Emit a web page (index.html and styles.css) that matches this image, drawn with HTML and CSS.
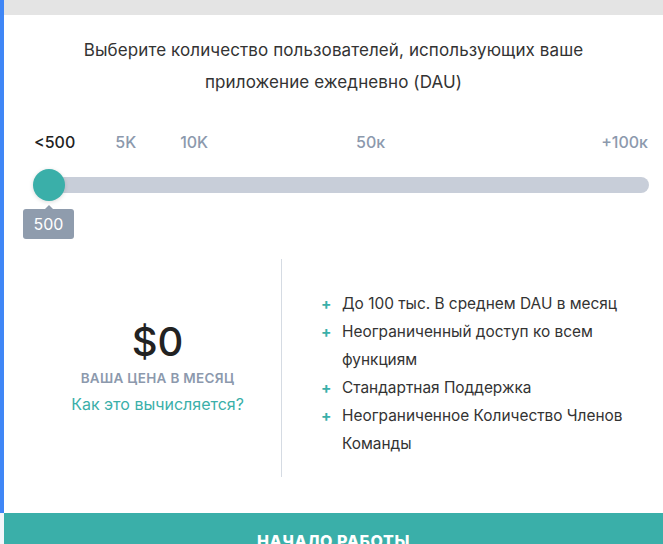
FILE: index.html
```html
<!DOCTYPE html>
<html lang="ru">
<head>
<meta charset="utf-8">
<title>Pricing</title>
<link rel="stylesheet" href="styles.css">
</head>
<body>
<div class="card">
  <div class="band"></div>
  <p class="intro">Выберите количество пользователей, использующих ваше<br>приложение ежедневно (DAU)</p>
  <div class="scale">
    <span class="tick active t1">&lt;500</span>
    <span class="tick t2">5K</span>
    <span class="tick t3">10K</span>
    <span class="tick t4">50к</span>
    <span class="tick t5">+100к</span>
  </div>
  <div class="track">
    <div class="thumb"></div>
    <div class="tip">500</div>
  </div>
  <div class="pricing">
    <div class="price">
      <div class="amount">$0</div>
      <div class="per">ВАША ЦЕНА В МЕСЯЦ</div>
      <a class="how" href="#">Как это вычисляется?</a>
    </div>
    <ul class="features">
      <li>До 100 тыс. В среднем DAU в месяц</li>
      <li>Неограниченный доступ ко всем функциям</li>
      <li>Стандартная Поддержка</li>
      <li>Неограниченное Количество Членов Команды</li>
    </ul>
  </div>
</div>
<div class="cta">НАЧАЛО РАБОТЫ</div>
</body>
</html>
```
FILE: styles.css
```css
html, body {
  margin: 0;
  padding: 0;
  background: #f3f6fb;
  font-family: "Inter", "Noto Sans", sans-serif;
  color: #333;
}
.card {
  background: #fff;
  border-left: 4px solid #3f86f6;
  padding-bottom: 36px;
}
.band {
  height: 15px;
  background: #e4e4e4;
}
.intro {
  margin: 0;
  padding-top: 19px;
  text-align: center;
  font-size: 17px;
  letter-spacing: 0.1px;
  line-height: 32px;
  color: #333;
}
.scale {
  display: flex;
  margin-top: 34px;
  padding-left: 30px;
  font-size: 16px;
  line-height: 20px;
  font-weight: 500;
}
.tick { color: #8c99ad; }
.tick.active { color: #222; }
.t2 { margin-left: 40px; }
.t3 { margin-left: 44px; }
.t4 { margin-left: 148px; }
.t5 { margin-left: auto; margin-right: 15px; }
.track {
  position: relative;
  margin: 25px 14px 0 30px;
  height: 16px;
  border-radius: 8px;
  background: #c8ced9;
}
.thumb {
  position: absolute;
  left: -1px;
  top: -8px;
  width: 32px;
  height: 32px;
  border-radius: 50%;
  background: #3aafa9;
  box-shadow: 0 1px 4px rgba(0,0,0,0.15);
}
.tip {
  position: absolute;
  left: -11px;
  top: 32px;
  width: 51px;
  height: 30px;
  line-height: 30px;
  border-radius: 3px;
  background: #8f9cad;
  color: #fff;
  text-align: center;
  font-size: 16px;
}
.tip::before {
  content: "";
  position: absolute;
  left: 22px;
  top: -4px;
  border-left: 4px solid transparent;
  border-right: 4px solid transparent;
  border-bottom: 4px solid #8f9cad;
}
.pricing {
  display: flex;
  margin-top: 66px;
  height: 218px;
}
.price {
  width: 247px;
  margin-left: 30px;
  border-right: 1px solid #d5dbe3;
  display: flex;
  flex-direction: column;
  align-items: center;
  justify-content: center;
  padding-bottom: 4px;
}
.amount {
  font-size: 40px;
  line-height: 46px;
  font-weight: 500;
  color: #222;
}
.per {
  margin-top: 4px;
  font-size: 13.5px;
  letter-spacing: 0.3px;
  line-height: 18px;
  font-weight: 600;
  color: #8c99ad;
}
.how {
  margin-top: 7px;
  font-size: 16px;
  line-height: 20px;
  color: #3aafa9;
  text-decoration: none;
}
.features {
  list-style: none;
  margin: 0;
  padding: 12px 0 0 39px;
  width: 320px;
  align-self: center;
  font-size: 15.4px;
  line-height: 28px;
  color: #333;
}
.features li {
  position: relative;
  padding-left: 21px;
}
.features li::before {
  content: "+";
  position: absolute;
  left: 0;
  top: 0;
  color: #3aafa9;
  font-weight: 700;
}
.cta {
  margin-left: 4px;
  height: 56px;
  line-height: 56px;
  background: #3aafa9;
  color: #fff;
  text-align: center;
  font-size: 16px;
  font-weight: 800;
  letter-spacing: 0.6px;
}
```
